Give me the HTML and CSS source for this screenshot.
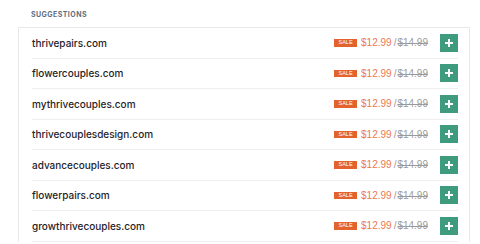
FILE: index.html
```html
<!DOCTYPE html>
<html>
<head>
<meta charset="utf-8">
<link rel="stylesheet" href="styles.css">
</head>
<body>
<div class="wrap">
  <div class="label">SUGGESTIONS</div>
  <div class="card">
    <div class="row"><span class="domain">thrivepairs.com</span><span class="price"><span class="sale">SALE</span><span class="now">$12.99</span><span class="slash">/</span><span class="was">$14.99</span></span><button class="add"><svg viewBox="0 0 10 10" width="10" height="10"><path d="M5 1v8M1 5h8" stroke="#fff" stroke-width="2"/></svg></button></div>
    <div class="row"><span class="domain">flowercouples.com</span><span class="price"><span class="sale">SALE</span><span class="now">$12.99</span><span class="slash">/</span><span class="was">$14.99</span></span><button class="add"><svg viewBox="0 0 10 10" width="10" height="10"><path d="M5 1v8M1 5h8" stroke="#fff" stroke-width="2"/></svg></button></div>
    <div class="row"><span class="domain">mythrivecouples.com</span><span class="price"><span class="sale">SALE</span><span class="now">$12.99</span><span class="slash">/</span><span class="was">$14.99</span></span><button class="add"><svg viewBox="0 0 10 10" width="10" height="10"><path d="M5 1v8M1 5h8" stroke="#fff" stroke-width="2"/></svg></button></div>
    <div class="row"><span class="domain">thrivecouplesdesign.com</span><span class="price"><span class="sale">SALE</span><span class="now">$12.99</span><span class="slash">/</span><span class="was">$14.99</span></span><button class="add"><svg viewBox="0 0 10 10" width="10" height="10"><path d="M5 1v8M1 5h8" stroke="#fff" stroke-width="2"/></svg></button></div>
    <div class="row"><span class="domain">advancecouples.com</span><span class="price"><span class="sale">SALE</span><span class="now">$12.99</span><span class="slash">/</span><span class="was">$14.99</span></span><button class="add"><svg viewBox="0 0 10 10" width="10" height="10"><path d="M5 1v8M1 5h8" stroke="#fff" stroke-width="2"/></svg></button></div>
    <div class="row"><span class="domain">flowerpairs.com</span><span class="price"><span class="sale">SALE</span><span class="now">$12.99</span><span class="slash">/</span><span class="was">$14.99</span></span><button class="add"><svg viewBox="0 0 10 10" width="10" height="10"><path d="M5 1v8M1 5h8" stroke="#fff" stroke-width="2"/></svg></button></div>
    <div class="row"><span class="domain">growthrivecouples.com</span><span class="price"><span class="sale">SALE</span><span class="now">$12.99</span><span class="slash">/</span><span class="was">$14.99</span></span><button class="add"><svg viewBox="0 0 10 10" width="10" height="10"><path d="M5 1v8M1 5h8" stroke="#fff" stroke-width="2"/></svg></button></div>
  </div>
</div>
</body>
</html>
```
FILE: styles.css
```css
html, body {
  margin: 0;
  padding: 0;
  background: #fff;
  overflow: hidden;
}
.wrap {
  padding: 10px 10px 0 18px;
  font-family: Inter, "Liberation Sans", sans-serif;
}
.label {
  padding-left: 13px;
  height: 17px;
  font-size: 7px;
  font-weight: 700;
  letter-spacing: 0.45px;
  color: #5f6f80;
  line-height: 10px;
}
.card {
  border: 1px solid #e6e8eb;
  border-bottom: none;
  padding: 0 11px 0 13px;
}
.row {
  display: flex;
  align-items: center;
  height: 30.5px;
  box-sizing: border-box;
  border-bottom: 1px solid #eceef0;
}
.domain {
  flex: 1;
  font-size: 10px;
  font-weight: 500;
  color: #1f2329;
}
.price {
  display: flex;
  align-items: center;
  font-family: "Liberation Sans", Arial, sans-serif;
  font-size: 10px;
}
.sale {
  background: #e4622b;
  color: #fff;
  font-size: 5.5px;
  width: 23px;
  height: 7.5px;
  line-height: 7.5px;
  text-align: center;
  margin-right: 4px;
}
.now {
  color: #ec7752;
}
.slash {
  color: #9a9a9a;
  margin: 0 1px 0 2px;
}
.was {
  color: #9a9a9a;
  text-decoration: line-through;
}
.add {
  margin-left: 12px;
  width: 18px;
  height: 18px;
  padding: 0;
  border: none;
  background: #3f9b7e;
  display: flex;
  align-items: center;
  justify-content: center;
}
.add svg {
  display: block;
}
```
